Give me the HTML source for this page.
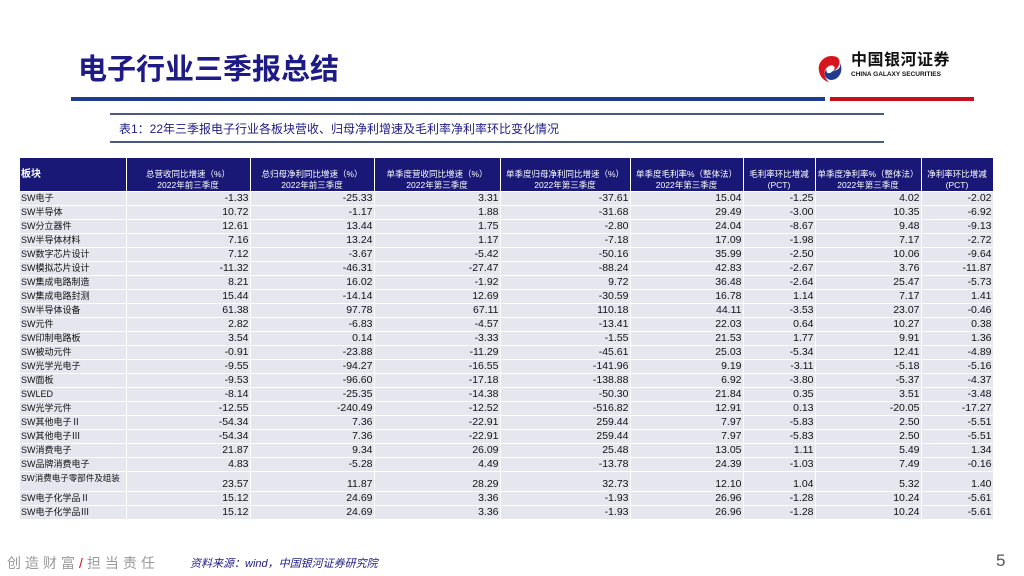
<!DOCTYPE html>
<html><head><meta charset="utf-8"><style>
body{margin:0;width:1024px;height:576px;background:#fff;position:relative;overflow:hidden;font-family:"Liberation Sans","Noto Sans CJK SC",sans-serif}
.t{position:absolute;left:78px;top:46px;font-size:29px;font-weight:bold;color:#1e1b87}
table{position:absolute;left:20px;top:158px;border-collapse:collapse;table-layout:fixed;width:973px;font-size:10.5px;color:#111}
td{padding:0 1px;text-align:right;border-right:1px solid #fff;border-bottom:1px solid #fff;height:13px;line-height:13px;background:#e6e6ee;overflow:hidden;white-space:nowrap}
td:first-child{text-align:left;font-size:9px}
tr.h td{background:#1a1877;color:#fff;font-size:8.5px;text-align:center;line-height:11px;height:33px;vertical-align:bottom;white-space:nowrap}
tr.h td:first-child{text-align:left;vertical-align:middle;font-weight:bold;font-size:10px}
</style></head><body>
<div class="t">电子行业三季报总结</div>
<svg style="position:absolute;left:815px;top:53px" width="30" height="30" viewBox="0 0 30 30"><path d="M22 4 C12 0 2 8 4 18 C5 24 9 28 14 29 C8 24 8 16 14 13 C18 11 22 14 18 18 C24 16 27 8 22 4Z" fill="#d8141c"/><path d="M18 18 C14 22 10 20 12 16 C8 19 9 26 16 27 C24 27 29 18 25 10 C26 15 23 17 18 18Z" fill="#1e3b8f"/></svg>
<div style="position:absolute;left:851px;top:52px;font-size:16px;font-weight:bold;color:#111;letter-spacing:0.5px;line-height:18px">中国银河证券</div>
<div style="position:absolute;left:851px;top:71px;font-size:6.5px;font-weight:bold;color:#111;line-height:8px">CHINA GALAXY SECURITIES</div>
<div style="position:absolute;left:71px;top:97px;width:754px;height:4px;background:#1e3b8f"></div>
<div style="position:absolute;left:830px;top:97px;width:144px;height:4px;background:#c8101c"></div>
<div style="position:absolute;left:110px;top:113px;width:774px;height:2px;background:#4a5a80"></div>
<div style="position:absolute;left:110px;top:141px;width:774px;height:2px;background:#4a5a80"></div>
<div style="position:absolute;left:119px;top:120px;font-size:12px;color:#1e1b87">表1：22年三季报电子行业各板块营收、归母净利增速及毛利率净利率环比变化情况</div>
<table>
<colgroup><col style="width:106px"><col style="width:124px"><col style="width:124px"><col style="width:126px"><col style="width:130px"><col style="width:113px"><col style="width:72px"><col style="width:106px"><col style="width:72px"></colgroup>
<tr class="h"><td>板块</td><td>总营收同比增速（%）<br>2022年前三季度</td><td>总归母净利同比增速（%）<br>2022年前三季度</td><td>单季度营收同比增速（%）<br>2022年第三季度</td><td>单季度归母净利同比增速（%）<br>2022年第三季度</td><td>单季度毛利率%（整体法）<br>2022年第三季度</td><td>毛利率环比增减<br>(PCT)</td><td>单季度净利率%（整体法）<br>2022年第三季度</td><td>净利率环比增减<br>(PCT)</td></tr>
<tr><td>SW电子</td><td>-1.33</td><td>-25.33</td><td>3.31</td><td>-37.61</td><td>15.04</td><td>-1.25</td><td>4.02</td><td>-2.02</td></tr>
<tr><td>SW半导体</td><td>10.72</td><td>-1.17</td><td>1.88</td><td>-31.68</td><td>29.49</td><td>-3.00</td><td>10.35</td><td>-6.92</td></tr>
<tr><td>SW分立器件</td><td>12.61</td><td>13.44</td><td>1.75</td><td>-2.80</td><td>24.04</td><td>-8.67</td><td>9.48</td><td>-9.13</td></tr>
<tr><td>SW半导体材料</td><td>7.16</td><td>13.24</td><td>1.17</td><td>-7.18</td><td>17.09</td><td>-1.98</td><td>7.17</td><td>-2.72</td></tr>
<tr><td>SW数字芯片设计</td><td>7.12</td><td>-3.67</td><td>-5.42</td><td>-50.16</td><td>35.99</td><td>-2.50</td><td>10.06</td><td>-9.64</td></tr>
<tr><td>SW模拟芯片设计</td><td>-11.32</td><td>-46.31</td><td>-27.47</td><td>-88.24</td><td>42.83</td><td>-2.67</td><td>3.76</td><td>-11.87</td></tr>
<tr><td>SW集成电路制造</td><td>8.21</td><td>16.02</td><td>-1.92</td><td>9.72</td><td>36.48</td><td>-2.64</td><td>25.47</td><td>-5.73</td></tr>
<tr><td>SW集成电路封测</td><td>15.44</td><td>-14.14</td><td>12.69</td><td>-30.59</td><td>16.78</td><td>1.14</td><td>7.17</td><td>1.41</td></tr>
<tr><td>SW半导体设备</td><td>61.38</td><td>97.78</td><td>67.11</td><td>110.18</td><td>44.11</td><td>-3.53</td><td>23.07</td><td>-0.46</td></tr>
<tr><td>SW元件</td><td>2.82</td><td>-6.83</td><td>-4.57</td><td>-13.41</td><td>22.03</td><td>0.64</td><td>10.27</td><td>0.38</td></tr>
<tr><td>SW印制电路板</td><td>3.54</td><td>0.14</td><td>-3.33</td><td>-1.55</td><td>21.53</td><td>1.77</td><td>9.91</td><td>1.36</td></tr>
<tr><td>SW被动元件</td><td>-0.91</td><td>-23.88</td><td>-11.29</td><td>-45.61</td><td>25.03</td><td>-5.34</td><td>12.41</td><td>-4.89</td></tr>
<tr><td>SW光学光电子</td><td>-9.55</td><td>-94.27</td><td>-16.55</td><td>-141.96</td><td>9.19</td><td>-3.11</td><td>-5.18</td><td>-5.16</td></tr>
<tr><td>SW面板</td><td>-9.53</td><td>-96.60</td><td>-17.18</td><td>-138.88</td><td>6.92</td><td>-3.80</td><td>-5.37</td><td>-4.37</td></tr>
<tr><td>SWLED</td><td>-8.14</td><td>-25.35</td><td>-14.38</td><td>-50.30</td><td>21.84</td><td>0.35</td><td>3.51</td><td>-3.48</td></tr>
<tr><td>SW光学元件</td><td>-12.55</td><td>-240.49</td><td>-12.52</td><td>-516.82</td><td>12.91</td><td>0.13</td><td>-20.05</td><td>-17.27</td></tr>
<tr><td>SW其他电子Ⅱ</td><td>-54.34</td><td>7.36</td><td>-22.91</td><td>259.44</td><td>7.97</td><td>-5.83</td><td>2.50</td><td>-5.51</td></tr>
<tr><td>SW其他电子Ⅲ</td><td>-54.34</td><td>7.36</td><td>-22.91</td><td>259.44</td><td>7.97</td><td>-5.83</td><td>2.50</td><td>-5.51</td></tr>
<tr><td>SW消费电子</td><td>21.87</td><td>9.34</td><td>26.09</td><td>25.48</td><td>13.05</td><td>1.11</td><td>5.49</td><td>1.34</td></tr>
<tr><td>SW品牌消费电子</td><td>4.83</td><td>-5.28</td><td>4.49</td><td>-13.78</td><td>24.39</td><td>-1.03</td><td>7.49</td><td>-0.16</td></tr>
<tr><td style="vertical-align:top;height:19px;font-size:8.5px">SW消费电子零部件及组装</td><td style="vertical-align:bottom">23.57</td><td style="vertical-align:bottom">11.87</td><td style="vertical-align:bottom">28.29</td><td style="vertical-align:bottom">32.73</td><td style="vertical-align:bottom">12.10</td><td style="vertical-align:bottom">1.04</td><td style="vertical-align:bottom">5.32</td><td style="vertical-align:bottom">1.40</td></tr>
<tr><td>SW电子化学品Ⅱ</td><td>15.12</td><td>24.69</td><td>3.36</td><td>-1.93</td><td>26.96</td><td>-1.28</td><td>10.24</td><td>-5.61</td></tr>
<tr><td>SW电子化学品Ⅲ</td><td>15.12</td><td>24.69</td><td>3.36</td><td>-1.93</td><td>26.96</td><td>-1.28</td><td>10.24</td><td>-5.61</td></tr>
</table>
<div style="position:absolute;left:7px;top:553px;font-size:14px;color:#999;letter-spacing:4px">创造财富<span style="color:#c8101c">/</span>担当责任</div>
<div style="position:absolute;left:190px;top:555px;font-size:11px;color:#1e1b87;font-style:italic">资料来源：wind，中国银河证券研究院</div>
<div style="position:absolute;left:996px;top:551px;font-size:17px;color:#555">5</div>
</body></html>
